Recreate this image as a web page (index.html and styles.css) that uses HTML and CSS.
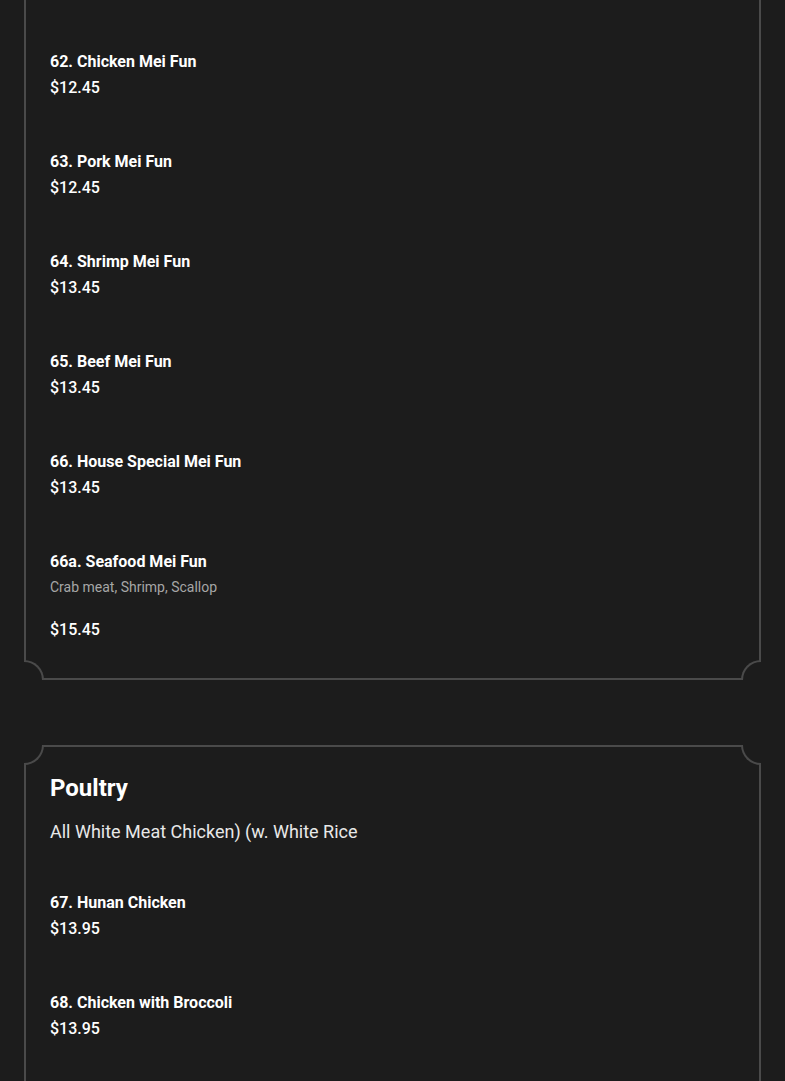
FILE: index.html
```html
<!DOCTYPE html>
<html lang="en">
<head>
<meta charset="utf-8">
<title>Menu</title>
<link rel="stylesheet" href="styles.css">
</head>
<body>
<main class="menu">
  <section class="card card-first">
    <span class="corner tl"></span><span class="corner tr"></span><span class="corner bl"></span><span class="corner br"></span>
    <div class="item">
      <div class="name">62. Chicken Mei Fun</div>
      <div class="price">$12.45</div>
    </div>
    <div class="item">
      <div class="name">63. Pork Mei Fun</div>
      <div class="price">$12.45</div>
    </div>
    <div class="item">
      <div class="name">64. Shrimp Mei Fun</div>
      <div class="price">$13.45</div>
    </div>
    <div class="item">
      <div class="name">65. Beef Mei Fun</div>
      <div class="price">$13.45</div>
    </div>
    <div class="item">
      <div class="name">66. House Special Mei Fun</div>
      <div class="price">$13.45</div>
    </div>
    <div class="item">
      <div class="name">66a. Seafood Mei Fun</div>
      <div class="desc">Crab meat, Shrimp, Scallop</div>
      <div class="price">$15.45</div>
    </div>
  </section>

  <section class="card card-last">
    <span class="corner tl"></span><span class="corner tr"></span><span class="corner bl"></span><span class="corner br"></span>
    <h2 class="title">Poultry</h2>
    <p class="subtitle">All White Meat Chicken) (w. White Rice</p>
    <div class="item">
      <div class="name">67. Hunan Chicken</div>
      <div class="price">$13.95</div>
    </div>
    <div class="item">
      <div class="name">68. Chicken with Broccoli</div>
      <div class="price">$13.95</div>
    </div>
  </section>
</main>
</body>
</html>
```

FILE: styles.css
```css
* { box-sizing: border-box; }

html, body {
  margin: 0;
  padding: 0;
  background: #1c1c1c;
  color: #ffffff;
  font-family: Roboto, "Liberation Sans", Arial, sans-serif;
  height: 1081px;
  overflow: hidden;
}

.menu {
  display: flex;
  flex-direction: column;
  gap: 65px;
  padding: 0 24px;
}

.card {
  position: relative;
  border: 2px solid #4a4a4a;
  padding: 0 24px 11px;
}

.card-first {
  margin-top: -40px;
  padding-top: 63px;
}

.card-last {
  padding-bottom: 80px;
}

.corner {
  position: absolute;
  width: 20px;
  height: 20px;
  background: #1c1c1c;
  border: 0 solid #4a4a4a;
}
.corner.tl { top: -2px; left: -2px; border-right-width: 2px; border-bottom-width: 2px; border-bottom-right-radius: 100%; }
.corner.tr { top: -2px; right: -2px; border-left-width: 2px; border-bottom-width: 2px; border-bottom-left-radius: 100%; }
.corner.bl { bottom: -2px; left: -2px; border-right-width: 2px; border-top-width: 2px; border-top-right-radius: 100%; }
.corner.br { bottom: -2px; right: -2px; border-left-width: 2px; border-top-width: 2px; border-top-left-radius: 100%; }

.item {
  padding: 25px 0;
}

.name {
  font-size: 16px;
  line-height: 24px;
  font-weight: 700;
  margin-bottom: 2px;
}

.price {
  font-size: 16px;
  line-height: 24px;
  font-weight: 500;
}

.desc {
  font-size: 14px;
  line-height: 20px;
  color: #a6a6a6;
  margin-top: 3px;
  margin-bottom: 21px;
}

.title {
  margin: 25px 0 0;
  font-size: 24px;
  line-height: 32px;
  font-weight: 700;
}

.subtitle {
  margin: 15px 0 21px;
  font-size: 18px;
  line-height: 26px;
  color: #e8e8e8;
}
```
